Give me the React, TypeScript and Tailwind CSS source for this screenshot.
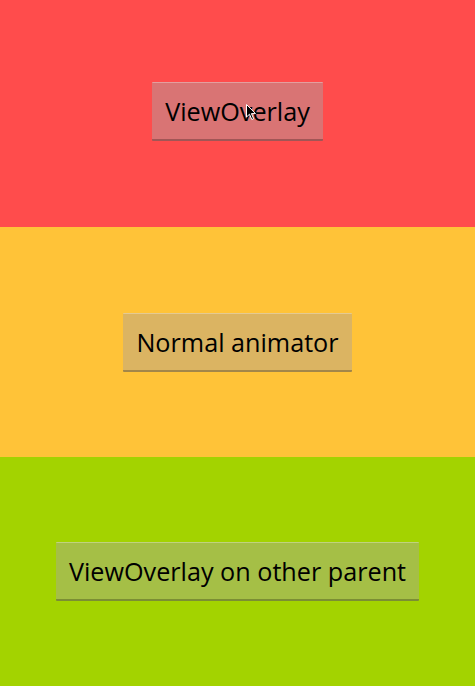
import React from "react";

function Cursor() {
  return (
    <svg
      className="absolute left-[94px] top-[21px] pointer-events-none"
      width="11"
      height="17"
      viewBox="0 0 11 17"
    >
      <path
        d="M0.5 0.5 L0.5 13 L3.5 10.2 L5.8 15.5 L7.6 14.7 L5.4 9.6 L9.5 9.6 Z"
        fill="#000"
        stroke="#fff"
        strokeWidth="1"
      />
    </svg>
  );
}

function HoloButton({ label, bg, cursor }: { label: string; bg: string; cursor?: boolean }) {
  return (
    <button
      className={`relative h-[59px] px-[13px] pt-[2px] text-[25.2px] leading-none text-black border-t border-t-white/30 border-b-2 border-b-black/25 rounded-[1px] ${bg}`}
      style={{ fontFamily: "'Open Sans', 'Noto Sans', sans-serif" }}
    >
      {label}
      {cursor && <Cursor />}
    </button>
  );
}

export default function App() {
  return (
    <div className="flex flex-col w-[475px] h-[686px] overflow-hidden">
      <section className="h-[227px] pb-[4px] bg-[#ff4c4c] flex items-center justify-center">
        <HoloButton label="ViewOverlay" bg="bg-[#d97474]" cursor />
      </section>
      <section className="h-[230px] bg-[#ffc338] flex items-center justify-center">
        <HoloButton label="Normal animator" bg="bg-[#dbb462]" />
      </section>
      <section className="flex-1 bg-[#a3d300] flex items-center justify-center">
        <HoloButton label="ViewOverlay on other parent" bg="bg-[#a5bf46]" />
      </section>
    </div>
  );
}
